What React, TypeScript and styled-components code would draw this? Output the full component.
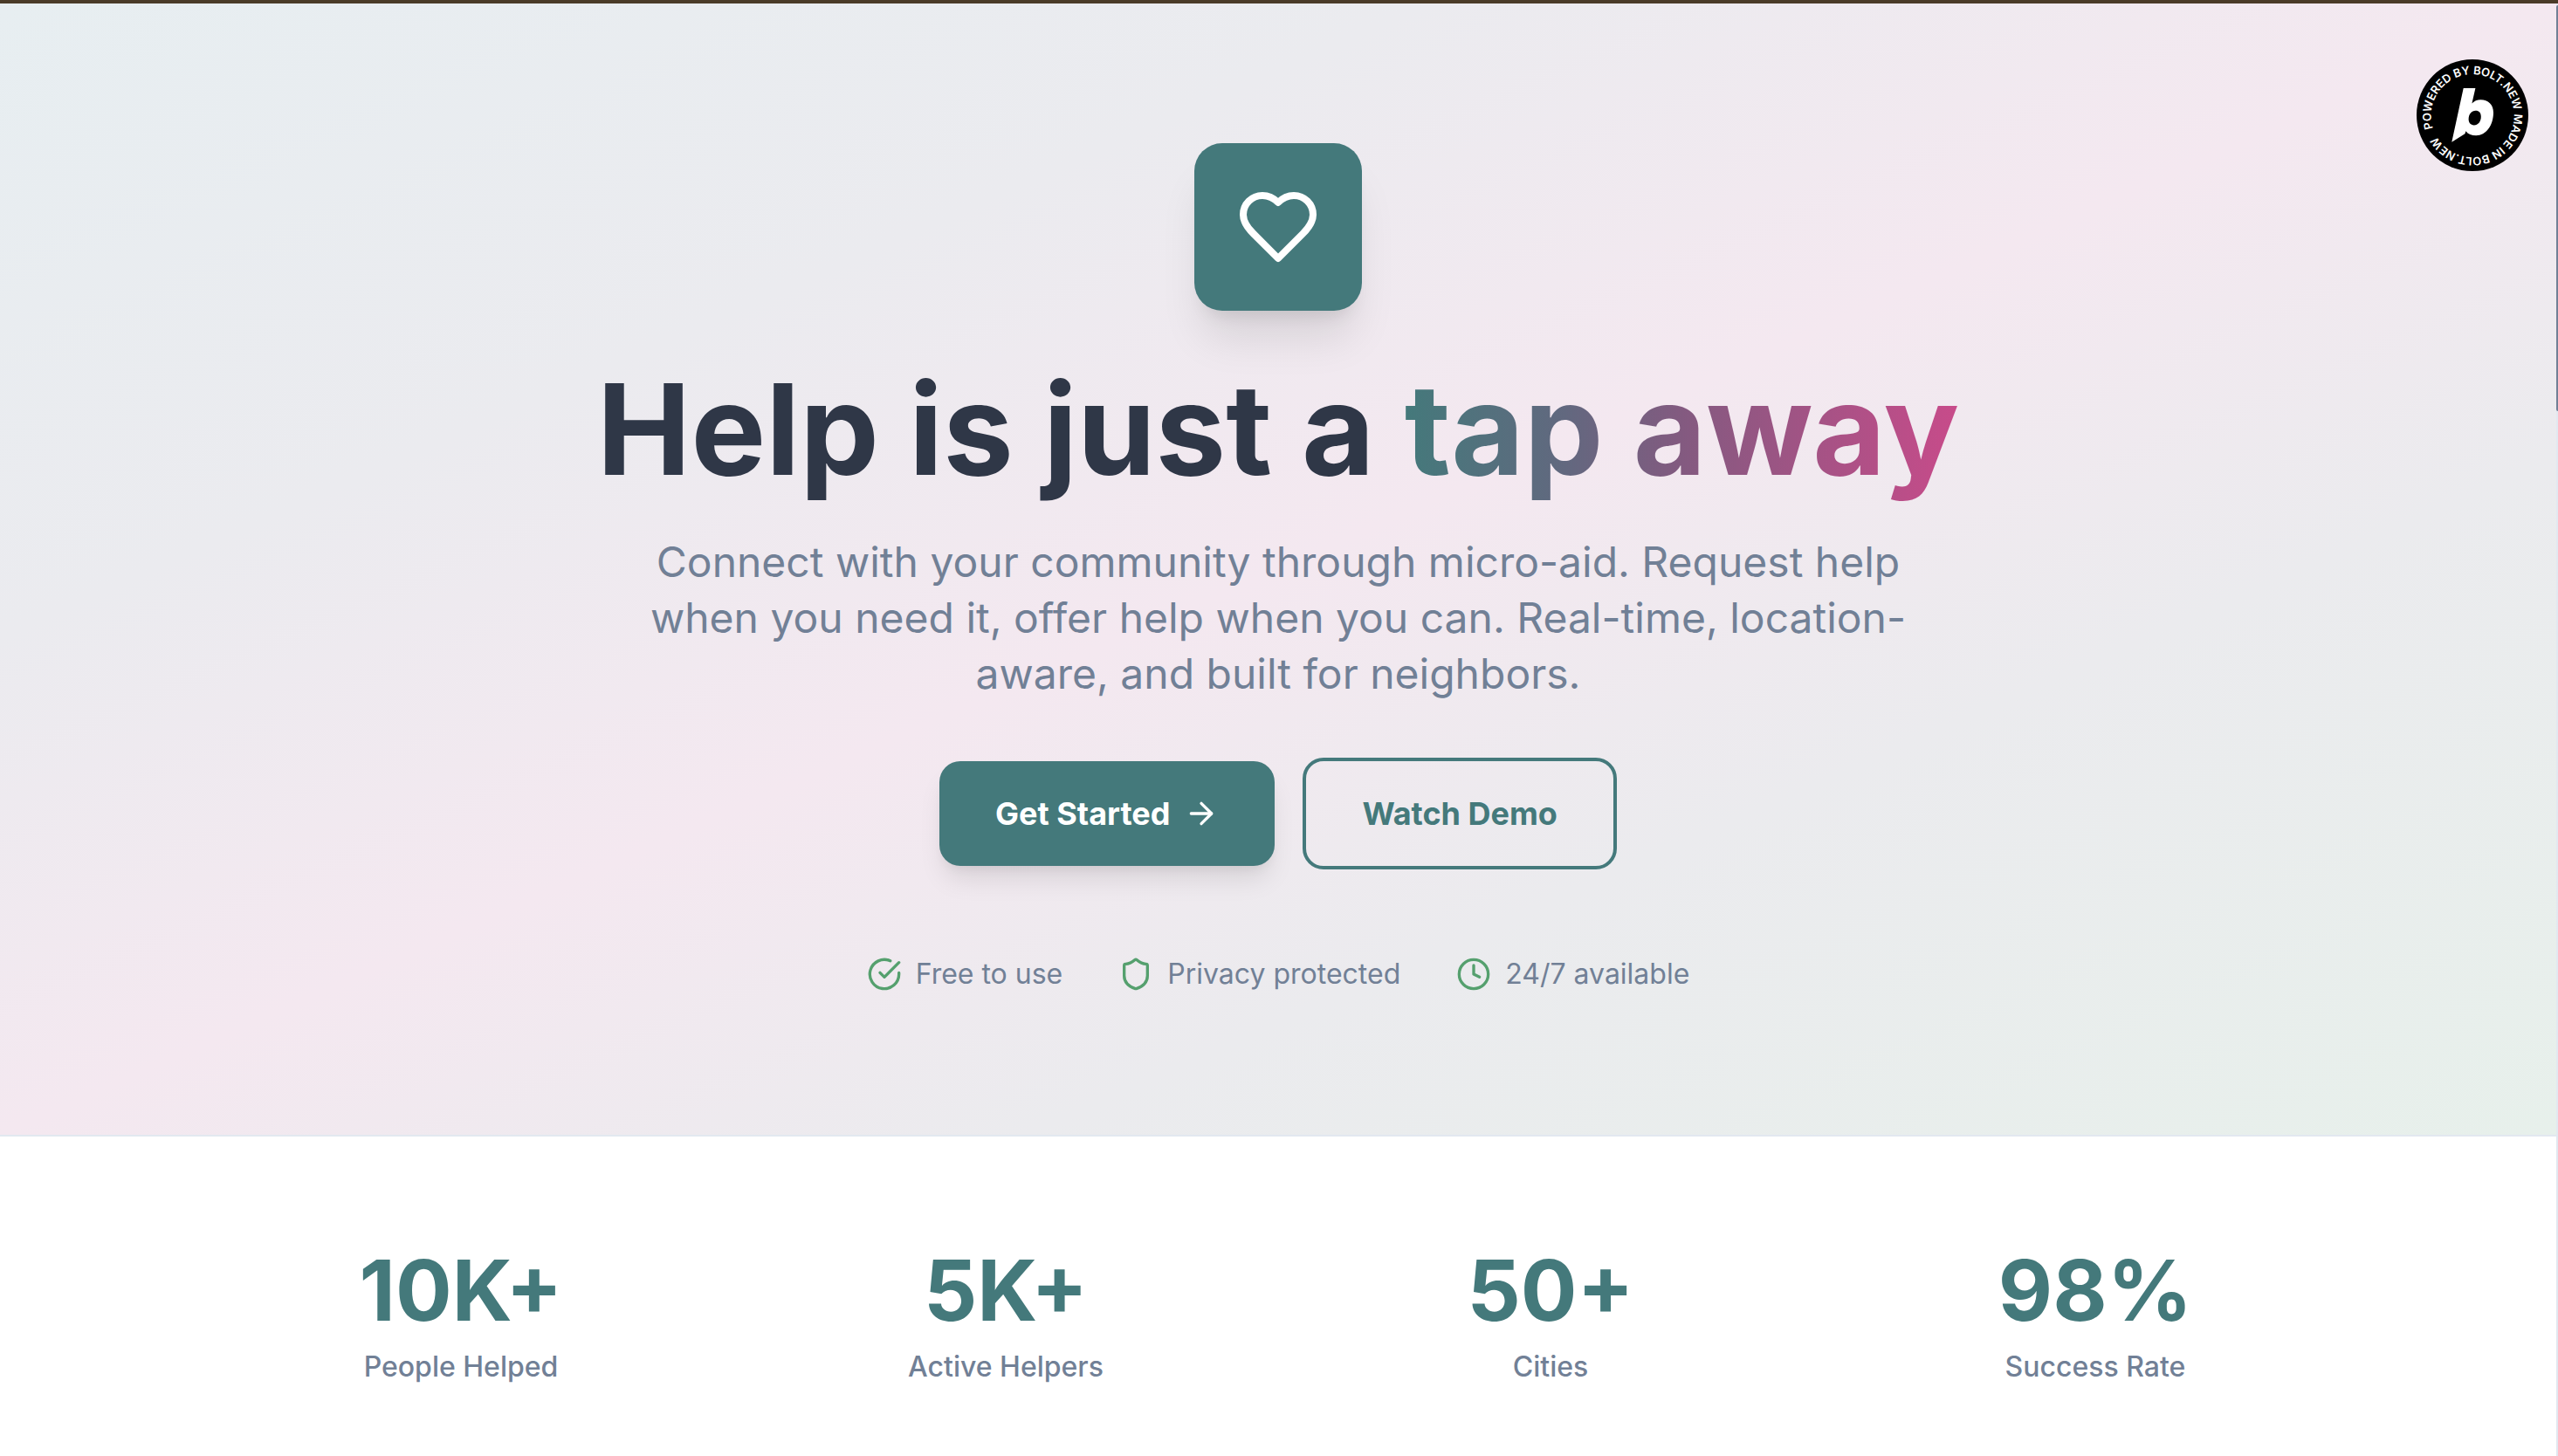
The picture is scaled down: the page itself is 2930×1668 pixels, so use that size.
import React from "react";
import styled, { createGlobalStyle } from "styled-components";
import { ArrowRight } from "lucide-react";

const color = {
  primary: "#44797b",
  accent: "#c84b8a",
  ink: "#2f3747",
  muted: "#718096",
  success: "#55a06e",
  line: "#e2e8f0",
};

const GlobalStyle = createGlobalStyle`
  *, *::before, *::after { box-sizing: border-box; }
  html, body { margin: 0; padding: 0; }
  body {
    font-family: Inter, "Liberation Sans", sans-serif;
    font-size: 32px;
    line-height: 48px;
    color: ${color.ink};
    background: #ffffff;
    overflow-x: hidden;
    -webkit-font-smoothing: antialiased;
  }
  h1, p, ul, dl, dt, dd { margin: 0; padding: 0; }
`;

const Screen = styled.div`
  height: 100vh;
  display: flex;
  flex-direction: column;
  overflow: hidden;
`;

const TopStrip = styled.div`
  height: 4px;
  flex: none;
  background: #4a3b28;
`;

const Viewport = styled.div`
  flex: 1;
  min-height: 0;
  display: flex;
`;

const Page = styled.main`
  position: relative;
  flex: 1;
  min-width: 0;
  overflow: hidden;
`;

const ScrollTrack = styled.div`
  width: 2px;
  flex: none;
  padding-top: 2px;
  background: ${color.line};
`;

const ScrollThumb = styled.div`
  height: 28%;
  border-radius: 2px 0 0 2px;
  background: ${color.muted};
`;

const Hero = styled.section`
  padding: 160px 64px;
  display: flex;
  flex-direction: column;
  align-items: center;
  text-align: center;
  background: linear-gradient(to bottom right, #e7eef1, #ebebef 28%, #f4e8f0 50%, #ebebee 70%, #e7f0eb);
`;

const HeroMark = styled.div`
  width: 192px;
  height: 192px;
  margin-bottom: 64px;
  display: flex;
  align-items: center;
  justify-content: center;
  border-radius: 32px;
  color: #ffffff;
  background: ${color.primary};
  box-shadow: 0 40px 50px -10px rgba(0, 0, 0, 0.1), 0 16px 20px -12px rgba(0, 0, 0, 0.1);
`;

const Title = styled.h1`
  margin-bottom: 48px;
  font-size: 144px;
  line-height: 144px;
  font-weight: 700;
`;

const TitleAccent = styled.span`
  color: transparent;
  background: linear-gradient(to right, ${color.primary}, #62687f 29%, #835a80 50%, ${color.accent});
  background-clip: text;
  -webkit-background-clip: text;
`;

const Lead = styled.p`
  max-width: 1536px;
  margin-bottom: 64px;
  font-size: 48px;
  line-height: 64px;
  color: ${color.muted};
`;

const Actions = styled.div`
  display: flex;
  align-items: center;
  gap: 32px;
  margin-bottom: 96px;
`;

const Button = styled.button<{ $outline?: boolean }>`
  display: inline-flex;
  align-items: center;
  gap: 16px;
  padding: 32px 64px;
  border: ${(p) => (p.$outline ? `4px solid ${color.primary}` : "0")};
  border-radius: 24px;
  font-family: inherit;
  font-size: 36px;
  line-height: 56px;
  font-weight: 700;
  cursor: pointer;
  color: ${(p) => (p.$outline ? color.primary : "#ffffff")};
  background: ${(p) => (p.$outline ? "transparent" : color.primary)};
  box-shadow: ${(p) =>
    p.$outline ? "none" : "0 20px 30px -6px rgba(0, 0, 0, 0.1), 0 8px 12px -4px rgba(0, 0, 0, 0.05)"};
`;

const TrustList = styled.ul`
  display: flex;
  align-items: center;
  gap: 64px;
  list-style: none;
  color: ${color.muted};
`;

const TrustItem = styled.li`
  display: flex;
  align-items: center;
  gap: 16px;

  svg {
    color: ${color.success};
  }
`;

const StatsBand = styled.section`
  padding: 128px 0;
  border-top: 2px solid ${color.line};
  border-bottom: 2px solid ${color.line};
  background: #ffffff;
`;

const StatsGrid = styled.dl`
  max-width: 2560px;
  margin: 0 auto;
  padding: 0 64px;
  display: grid;
  grid-template-columns: repeat(4, 1fr);
  gap: 64px;
`;

const Stat = styled.div`
  display: flex;
  flex-direction: column-reverse;
  gap: 16px;
  text-align: center;
`;

const StatLabel = styled.dt`
  font-weight: 500;
  color: ${color.muted};
`;

const StatValue = styled.dd`
  font-size: 96px;
  line-height: 96px;
  font-weight: 700;
  color: ${color.primary};
`;

const BadgeLink = styled.a`
  position: absolute;
  top: 64px;
  right: 32px;
  width: 128px;
  height: 128px;

  svg {
    display: block;
  }

  text {
    font-family: Inter, "Liberation Sans", sans-serif;
    font-size: 13px;
    font-weight: 600;
    fill: #ffffff;
  }
`;

const Icon = ({ size, children }: { size: number; children: React.ReactNode }) => (
  <svg
    width={size}
    height={size}
    viewBox="0 0 24 24"
    fill="none"
    stroke="currentColor"
    strokeWidth="2"
    strokeLinecap="round"
    strokeLinejoin="round"
    aria-hidden="true"
  >
    {children}
  </svg>
);

const HeartIcon = () => (
  <Icon size={96}>
    <path d="M19 14c1.49-1.46 3-3.21 3-5.5A5.5 5.5 0 0 0 16.5 3c-1.76 0-3 .5-4.5 2-1.5-1.5-2.74-2-4.5-2A5.5 5.5 0 0 0 2 8.5c0 2.3 1.5 4.05 3 5.5l7 7Z" />
  </Icon>
);

const CheckIcon = () => (
  <Icon size={40}>
    <path d="M22 11.08V12a10 10 0 1 1-5.93-9.14" />
    <path d="m9 11 3 3L22 4" />
  </Icon>
);

const ShieldIcon = () => (
  <Icon size={40}>
    <path d="M20 13c0 5-3.5 7.5-7.66 8.95a1 1 0 0 1-.67-.01C7.5 20.5 4 18 4 13V6a1 1 0 0 1 1-1c2 0 4.5-1.2 6.24-2.72a1.17 1.17 0 0 1 1.52 0C14.51 3.81 17 5 19 5a1 1 0 0 1 1 1z" />
  </Icon>
);

const ClockIcon = () => (
  <Icon size={40}>
    <circle cx="12" cy="12" r="10" />
    <polyline points="12 6 12 12 16 14" />
  </Icon>
);

const BoltBadge = () => (
  <BadgeLink href="#bolt" aria-label="Powered by Bolt.new">
    <svg width="128" height="128" viewBox="0 0 128 128">
      <defs>
        <path id="badge-ring" d="M18.9 79A47.5 47.5 0 1 1 19.3 80.2" />
      </defs>
      <circle cx="64" cy="64" r="64" fill="#000000" />
      <text>
        <textPath href="#badge-ring">POWERED BY BOLT.NEW MADE IN BOLT.NEW</textPath>
      </text>
      <path
        fill="#ffffff"
        fillRule="evenodd"
        d="M53.7 33H67.4L63.4 50.6C66 47.6 69.4 46.2 73.4 46.2C82 46.2 88 51.8 88 61C88 75.6 79.6 87.2 68.2 87.2C63 87.2 58.8 85.4 56.4 82.2L55.4 85.2L40.3 94.7ZM67.6 58.8C63.2 58.8 59.6 62.6 59.6 68.6C59.6 72.8 62 75.4 65.8 75.4C70.4 75.4 73.8 71.4 73.8 65.8C73.8 61.4 71.6 58.8 67.6 58.8Z"
      />
    </svg>
  </BadgeLink>
);

const trust = [
  { label: "Free to use", icon: <CheckIcon /> },
  { label: "Privacy protected", icon: <ShieldIcon /> },
  { label: "24/7 available", icon: <ClockIcon /> },
];

const stats = [
  { value: "10K+", label: "People Helped" },
  { value: "5K+", label: "Active Helpers" },
  { value: "50+", label: "Cities" },
  { value: "98%", label: "Success Rate" },
];

export default function App() {
  return (
    <Screen>
      <GlobalStyle />
      <TopStrip />
      <Viewport>
        <Page>
          <Hero>
            <HeroMark>
              <HeartIcon />
            </HeroMark>
            <Title>
              Help is just a <TitleAccent>tap away</TitleAccent>
            </Title>
            <Lead>
              Connect with your community through micro-aid. Request help when you need it, offer
              help when you can. Real-time, location-aware, and built for neighbors.
            </Lead>
            <Actions>
              <Button type="button">
                Get Started
                <ArrowRight size={40} aria-hidden="true" />
              </Button>
              <Button type="button" $outline>
                Watch Demo
              </Button>
            </Actions>
            <TrustList>
              {trust.map((item) => (
                <TrustItem key={item.label}>
                  {item.icon}
                  <span>{item.label}</span>
                </TrustItem>
              ))}
            </TrustList>
          </Hero>
          <StatsBand>
            <StatsGrid>
              {stats.map((stat) => (
                <Stat key={stat.label}>
                  <StatLabel>{stat.label}</StatLabel>
                  <StatValue>{stat.value}</StatValue>
                </Stat>
              ))}
            </StatsGrid>
          </StatsBand>
          <BoltBadge />
        </Page>
        <ScrollTrack aria-hidden="true">
          <ScrollThumb />
        </ScrollTrack>
      </Viewport>
    </Screen>
  );
}
